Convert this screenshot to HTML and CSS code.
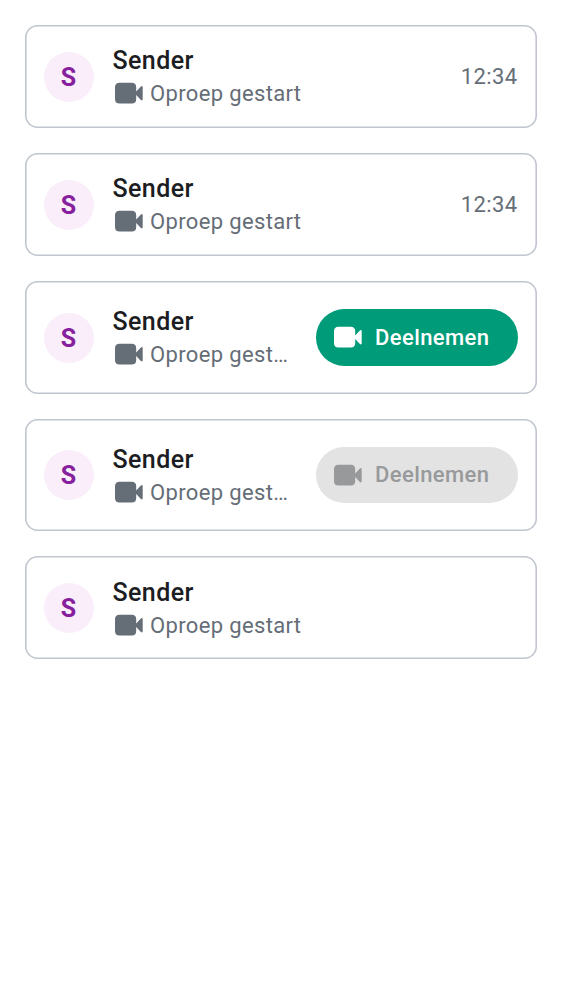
FILE: index.html
```
<!DOCTYPE html>
<html lang="nl">
<head>
<meta charset="utf-8">
<title>Oproepen</title>
<link rel="stylesheet" href="styles.css">
</head>
<body>
<svg class="defs" width="0" height="0"><symbol id="video" viewBox="0 0 28 22"><path d="M4.500.8h12.200q4.500 0 4.500 4.500v4.200l4.200-4.500q2.300-2 2.300.5v11.600q0 2.500-2.300.5l-4.200-4.500V17q0 4.500-4.500 4.500H4.500Q0 21.500 0 17V5.300Q0 .8 4.500.8z"/></symbol></svg>
<main class="list">
<article class="card"><div class="avatar">S</div><div class="info"><div class="name">Sender</div><div class="status"><svg class="icon"><use href="#video"/></svg><span class="label">Oproep gestart</span></div></div><time class="time">12:34</time></article>
<article class="card"><div class="avatar">S</div><div class="info"><div class="name">Sender</div><div class="status"><svg class="icon"><use href="#video"/></svg><span class="label">Oproep gestart</span></div></div><time class="time">12:34</time></article>
<article class="card card-action"><div class="avatar">S</div><div class="info"><div class="name">Sender</div><div class="status"><svg class="icon"><use href="#video"/></svg><span class="label">Oproep gest…</span></div></div><button class="join"><svg class="icon"><use href="#video"/></svg>Deelnemen</button></article>
<article class="card card-action card-disabled"><div class="avatar">S</div><div class="info"><div class="name">Sender</div><div class="status"><svg class="icon"><use href="#video"/></svg><span class="label">Oproep gest…</span></div></div><button class="join" disabled><svg class="icon"><use href="#video"/></svg>Deelnemen</button></article>
<article class="card card-ended"><div class="avatar">S</div><div class="info"><div class="name">Sender</div><div class="status"><svg class="icon"><use href="#video"/></svg><span class="label">Oproep gestart</span></div></div></article>
</main>
</body>
</html>
```
FILE: styles.css
```
* { box-sizing: border-box; }
body { margin: 0; background: #fff; font-family: Roboto, sans-serif; }
.defs { display: block; }
.list { display: flex; flex-direction: column; gap: 25px; padding: 25px; }
.card { display: flex; align-items: center; height: 103px; padding: 0 19px; box-shadow: inset 0 0 0 1.600px #c0c5cf; border-radius: 12.500px; }
.card-action { height: 113px; }
.card-disabled { height: 112px; }
.avatar { flex: none; width: 50px; height: 50px; border-radius: 50%; background: #f9eefa; color: #87209d; font-size: 25px; font-weight: 700; line-height: 52px; text-align: center; text-indent: -1px; }
.info { flex: 1; min-width: 0; margin-left: 18.500px; }
.card-ended .info { padding-top: 2px; }
.name { color: #1b1d22; font-size: 25px; font-weight: 500; letter-spacing: .4px; line-height: 34px; }
.status { display: flex; align-items: center; height: 31px; color: #656d77; }
.icon { flex: none; width: 28px; height: 22px; fill: currentColor; }
.status .icon { margin: 0 7px 1px 2.500px; }
.label { overflow: hidden; font-size: 22px; letter-spacing: .35px; white-space: nowrap; }
.time { margin-right: .5px; color: #656d77; font-size: 22px; letter-spacing: .4px; }
.join { display: flex; align-items: center; flex: none; gap: 13px; width: 202px; height: 57px; margin-left: 25px; padding: 0 18px; border: 0; border-radius: 28.500px; background: #009b78; color: #fff; font: 500 22px/30px Roboto, sans-serif; letter-spacing: .4px; }
.join:disabled { height: 56px; background: #e3e3e3; color: #98999b; }
.join .icon { margin-bottom: 1px; }
```
